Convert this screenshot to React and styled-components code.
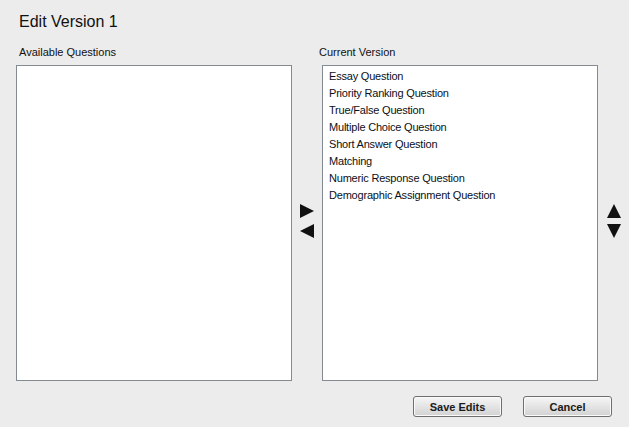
import styled, { createGlobalStyle } from 'styled-components';

const GlobalStyle = createGlobalStyle`
  html, body {
    margin: 0;
    padding: 0;
    background: #ececec;
    font-family: "Liberation Sans", Arial, sans-serif;
  }
`

const Page = styled.div`
  width: 629px;
  height: 427px;
  box-sizing: border-box;
  padding: 12px 0 0 16px;
  background: #ececec;
  color: #000;
`
const Title = styled.h1`
  margin: 0 0 0 3px;
  font-size: 16px;
  font-weight: normal;
  line-height: 20px;
  color: #111;
`
const Columns = styled.div`
  display: flex;
  align-items: stretch;
  margin-top: 13px;
`
const Column = styled.div`
  display: flex;
  flex-direction: column;
  width: 276px;
`
const Label = styled.div`
  font-size: 11px;
  line-height: 14px;
  margin: 0 0 6px ${p => p.$offset}px;
  color: #111;
`
const ListBox = styled.div`
  box-sizing: border-box;
  height: 316px;
  background: #fff;
  border: 1px solid #848a92;
  padding: 2px 0 0 6px;
`
const Item = styled.div`
  font-size: 11px;
  letter-spacing: -0.2px;
  line-height: 17px;
  color: #0b1020;
`
const Arrows = styled.div`
  display: flex;
  flex-direction: column;
  justify-content: center;
  align-items: center;
  gap: ${p => p.$gap}px;
  width: ${p => p.$width}px;
  padding-top: 15px;
`
const Tri = styled.div`
  width: 0;
  height: 0;
  border-style: solid;
  ${p => p.$dir === 'right' && 'border-width: 7px 0 7px 14px; border-color: transparent transparent transparent #111;'}
  ${p => p.$dir === 'left' && 'border-width: 7px 14px 7px 0; border-color: transparent #111 transparent transparent;'}
  ${p => p.$dir === 'up' && 'border-width: 0 7px 14px 7px; border-color: transparent transparent #111 transparent;'}
  ${p => p.$dir === 'down' && 'border-width: 14px 7px 0 7px; border-color: #111 transparent transparent transparent;'}
`
const Footer = styled.div`
  display: flex;
  justify-content: flex-end;
  gap: 21px;
  width: 596px;
  margin-top: 15px;
`
const Button = styled.button`
  width: 89px;
  height: 21px;
  border: 1px solid #6f6f6f;
  border-radius: 3px;
  background: linear-gradient(#f6f6f6, #e4e4e4 50%, #d2d2d2);
  box-shadow: inset 0 0 0 1px #fafafa;
  font-family: "Liberation Sans", Arial, sans-serif;
  font-size: 11px;
  font-weight: bold;
  color: #1a1a1a;
  padding: 0;
`

const questions = [
  'Essay Question',
  'Priority Ranking Question',
  'True/False Question',
  'Multiple Choice Question',
  'Short Answer Question',
  'Matching',
  'Numeric Response Question',
  'Demographic Assignment Question',
]

export default function App() {
  return (
    <>
      <GlobalStyle />
      <Page>
        <Title>Edit Version 1</Title>
        <Columns>
          <Column>
            <Label $offset={3}>Available Questions</Label>
            <ListBox />
          </Column>
          <Arrows $width={30} $gap={6}>
            <Tri $dir="right" />
            <Tri $dir="left" />
          </Arrows>
          <Column>
            <Label $offset={-3}>Current Version</Label>
            <ListBox>
              {questions.map(q => <Item key={q}>{q}</Item>)}
            </ListBox>
          </Column>
          <Arrows $width={31} $gap={6}>
            <Tri $dir="up" />
            <Tri $dir="down" />
          </Arrows>
        </Columns>
        <Footer>
          <Button>Save Edits</Button>
          <Button>Cancel</Button>
        </Footer>
      </Page>
    </>
  );
}
